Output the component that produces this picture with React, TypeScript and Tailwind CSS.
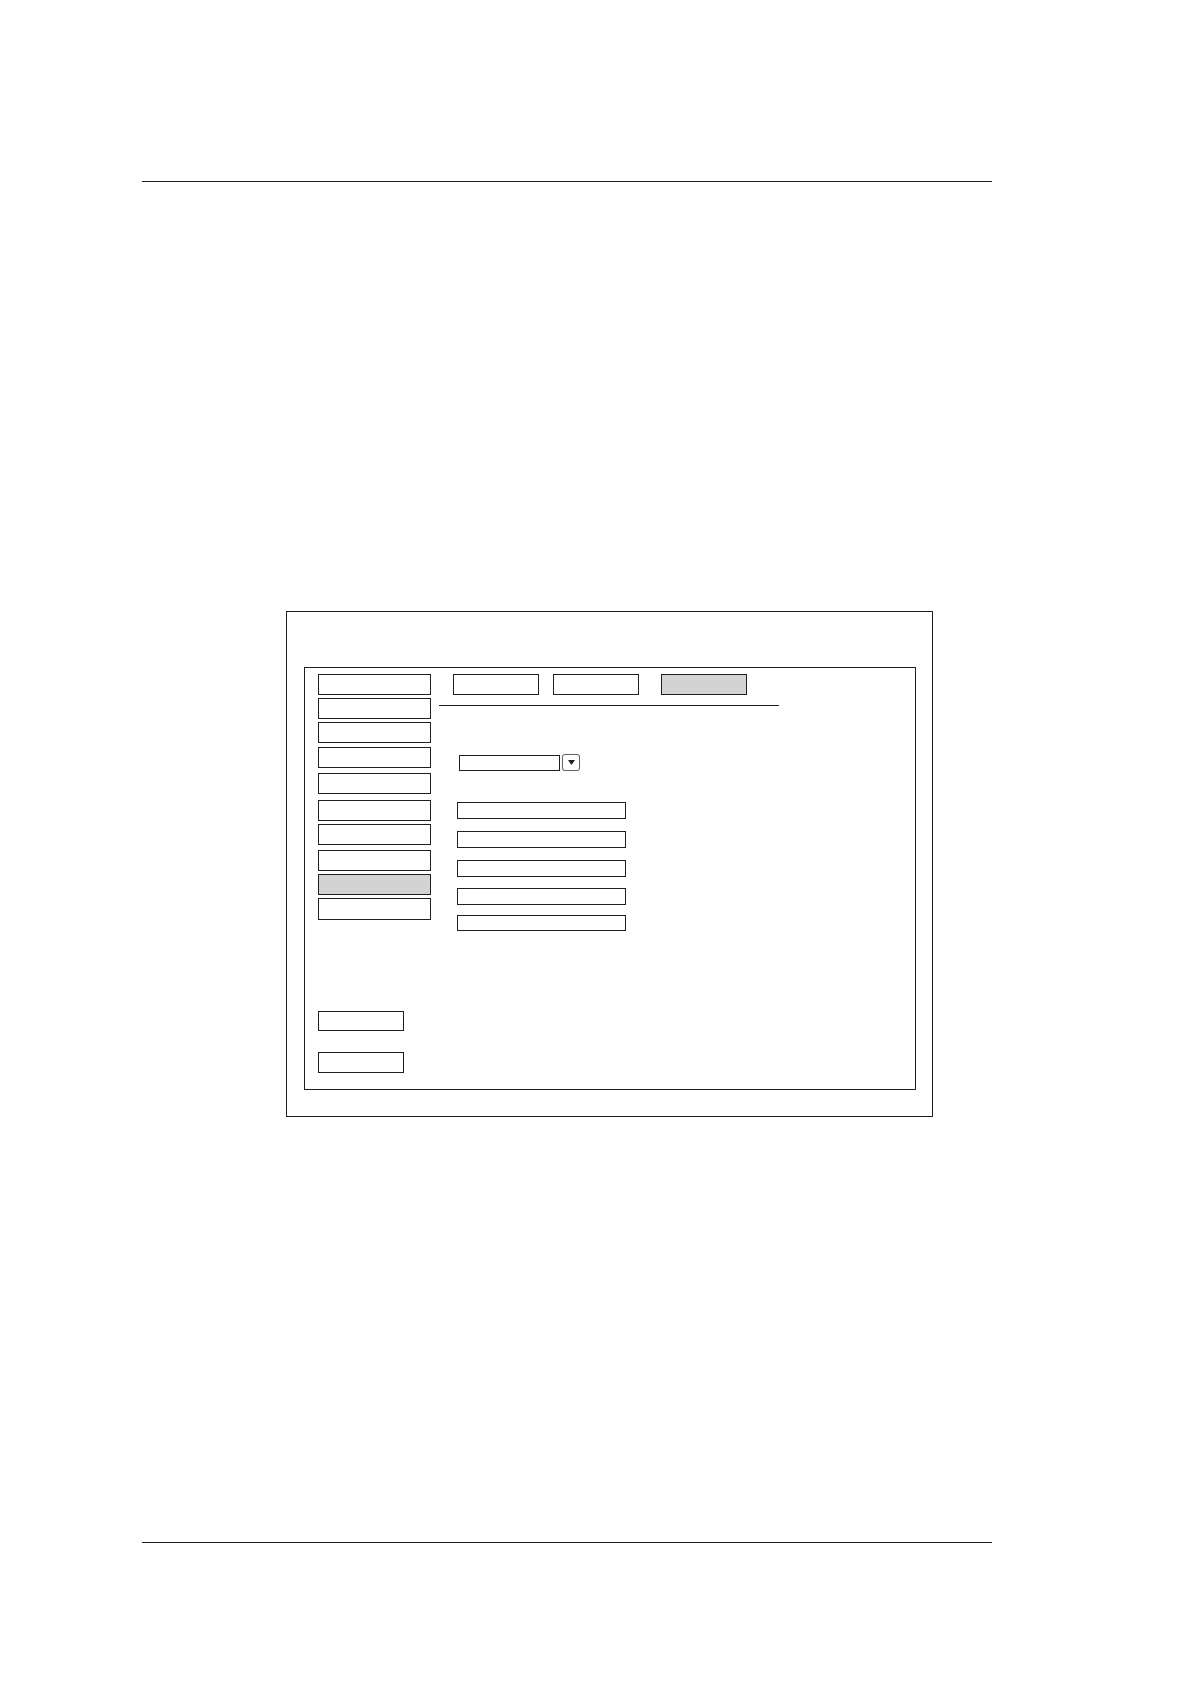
import React from "react";

const box = "box-border border border-[#1e1e1e] bg-white";

export default function App() {
  const leftTops = [
    "mt-0",
    "mt-[3px]",
    "mt-[3px]",
    "mt-[4px]",
    "mt-[5px]",
    "mt-[6px]",
    "mt-[3px]",
    "mt-[5px]",
    "mt-[3px]",
    "mt-[3px]",
  ];
  const fieldTops = ["mt-[31px]", "mt-[12px]", "mt-[12px]", "mt-[11px]", "mt-[10px]"];
  return (
    <div className="w-[1191px] h-[1684px] bg-white flex flex-col" style={{ fontFamily: '"Liberation Sans", sans-serif' }}>
      <div className="mt-[181px] ml-[142px] w-[850px] h-px bg-[#1e1e1e]" />
      <div className="mt-[429px] ml-[286px] w-[647px] h-[506px] box-border border border-[#1e1e1e] pt-[55px] pl-[17px]">
        <div className="w-[612px] h-[423px] box-border border border-[#1e1e1e] flex pl-[13px] pt-[6px]">
          {/* left column */}
          <div className="flex flex-col w-[113px]">
            {leftTops.map((mt, i) => (
              <div
                key={i}
                className={`${mt} w-[113px] ${i === 9 ? "h-[22px]" : "h-[21px]"} box-border border border-[#1e1e1e] ${i === 8 ? "bg-[#d3d3d3]" : "bg-white"}`}
              />
            ))}
            <div className={`mt-[91px] w-[86px] h-[20px] ${box}`} />
            <div className={`mt-[21px] w-[86px] h-[21px] ${box}`} />
          </div>
          {/* right column */}
          <div className="ml-[8px] flex flex-col">
            <div className="flex">
              <div className={`ml-[14px] w-[86px] h-[21px] ${box}`} />
              <div className={`ml-[14px] w-[86px] h-[21px] ${box}`} />
              <div className="ml-[22px] w-[86px] h-[21px] box-border border border-[#1e1e1e] bg-[#d3d3d3]" />
            </div>
            <div className="mt-[10px] w-[340px] h-px bg-[#1e1e1e]" />
            <div className="mt-[48px] ml-[20px] flex items-center">
              <div className={`w-[101px] h-[16px] ${box}`} />
              <div className="ml-[2px] w-[18px] h-[17px] box-border border border-[#666] rounded-[3px] bg-white flex items-center justify-center shadow-[0_0_1px_rgba(0,0,0,0.3)]">
                <svg width="7" height="5" viewBox="0 0 7 5">
                  <polygon points="0,0 7,0 3.5,5" fill="#222" />
                </svg>
              </div>
            </div>
            {fieldTops.map((mt, i) => (
              <div key={i} className={`${mt} ml-[18px] w-[169px] ${i === 4 ? "h-[16px]" : "h-[17px]"} ${box}`} />
            ))}
          </div>
        </div>
      </div>
      <div className="mt-[425px] ml-[142px] w-[850px] h-px bg-[#1e1e1e]" />
    </div>
  );
}
